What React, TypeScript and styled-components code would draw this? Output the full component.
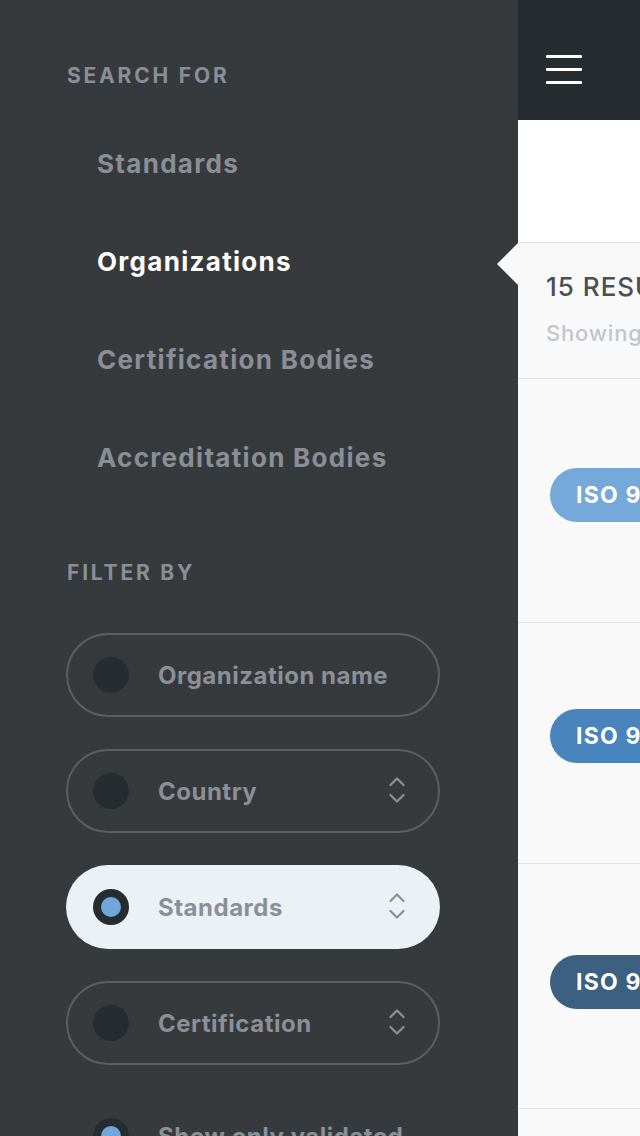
import React from "react";
import styled, { createGlobalStyle } from "styled-components";

const Global = createGlobalStyle`
  html, body { margin: 0; padding: 0; overflow: hidden; }
  body { font-family: Inter, "Noto Sans", sans-serif; background: #f9f9f9; }
  #root { width: 640px; height: 1136px; overflow: hidden; }
`;

const Page = styled.div`
  display: flex;
  width: 640px;
  height: 1136px;
`;

const Sidebar = styled.aside`
  flex: 0 0 518px;
  background: #373a3c;
  box-sizing: border-box;
  padding: 64px 0 0 66px;
  display: flex;
  flex-direction: column;
`;

const SectionTitle = styled.div`
  font-size: 21px;
  font-weight: 700;
  letter-spacing: 2.8px;
  line-height: 24px;
  color: #8a8f97;
  padding-left: 1px;
`;

const NavList = styled.nav`
  display: flex;
  flex-direction: column;
  margin: 26px 0 55px 31px;
`;

const NavItem = styled.div<{ $active?: boolean }>`
  height: 98px;
  display: flex;
  align-items: center;
  font-size: 26px;
  font-weight: 700;
  letter-spacing: 1.3px;
  color: ${(p) => (p.$active ? "#ffffff" : "#8a8f97")};
`;

const FilterList = styled.div`
  display: flex;
  flex-direction: column;
  gap: 32px;
  margin-top: 48px;
`;

const Pill = styled.div<{ $active?: boolean }>`
  width: 374px;
  height: 84px;
  box-sizing: border-box;
  border-radius: 42px;
  border: 2px solid ${(p) => (p.$active ? "transparent" : "#596064")};
  background: ${(p) => (p.$active ? "#eaf2f6" : "transparent")};
  display: flex;
  align-items: center;
  padding: 0 33px 0 25px;
`;

const ToggleRow = styled(Pill)`
  border-color: transparent;
  margin-top: -3px;
`;

const Dot = styled.span<{ $on?: boolean }>`
  flex: 0 0 36px;
  width: 36px;
  height: 36px;
  border-radius: 50%;
  background: #262d30;
  display: flex;
  align-items: center;
  justify-content: center;
  &::after {
    content: "";
    width: 20px;
    height: 20px;
    border-radius: 50%;
    background: #6fa7da;
    display: ${(p) => (p.$on ? "block" : "none")};
  }
`;

const PillLabel = styled.span`
  flex: 1;
  margin-left: 29px;
  font-size: 24px;
  font-weight: 700;
  letter-spacing: 0.5px;
  color: #8b9098;
  white-space: nowrap;
`;

const Chevrons = styled.svg`
  width: 16px;
  height: 28px;
  flex: 0 0 16px;
  margin-top: -3px;
`;

const Main = styled.main`
  flex: 1;
  min-width: 0;
  display: flex;
  flex-direction: column;
  background: #f9f9f9;
`;

const TopBar = styled.header`
  height: 120px;
  background: #262c2f;
  box-sizing: border-box;
  padding: 55px 0 0 28px;
`;

const Burger = styled.div`
  width: 36px;
  display: flex;
  flex-direction: column;
  gap: 10px;
  span {
    display: block;
    height: 3px;
    background: #ffffff;
    border-radius: 1px;
  }
`;

const Blank = styled.div`
  height: 122px;
  background: #ffffff;
  border-bottom: 1px solid #e4e4e4;
`;

const ResultsHead = styled.div`
  position: relative;
  height: 136px;
  box-sizing: border-box;
  border-bottom: 1px solid #e4e4e4;
  padding: 28px 0 0 28px;
  white-space: nowrap;
  &::before {
    content: "";
    position: absolute;
    left: -21px;
    top: 0;
    border-style: solid;
    border-width: 21px 21px 21px 0;
    border-color: transparent #f9f9f9 transparent transparent;
  }
`;

const Count = styled.div`
  font-size: 26px;
  font-weight: 500;
  letter-spacing: 1px;
  color: #4a4f55;
  line-height: 32px;
`;

const Showing = styled.div`
  margin-top: 16px;
  font-size: 22px;
  font-weight: 500;
  letter-spacing: 0.8px;
  color: #c1c6ce;
  line-height: 28px;
`;

const Row = styled.div<{ $top: number; $bottom: number }>`
  padding: ${(p) => p.$top}px 0 ${(p) => p.$bottom}px 32px;
  border-bottom: 1px solid #e4e4e4;
  white-space: nowrap;
`;

const Badge = styled.span<{ $color: string }>`
  display: inline-flex;
  align-items: center;
  height: 54px;
  border-radius: 27px;
  padding: 0 26px;
  background: ${(p) => p.$color};
  color: #ffffff;
  font-size: 23px;
  font-weight: 700;
  letter-spacing: 1.2px;
`;

const ChevronIcon = () => (
  <Chevrons viewBox="0 0 16 28" fill="none" stroke="#8b9098" strokeWidth="2.2" strokeLinecap="round" strokeLinejoin="round">
    <polyline points="1.5,9 8,2.5 14.5,9" />
    <polyline points="1.5,19 8,25.5 14.5,19" />
  </Chevrons>
);

const filters = [
  { label: "Organization name", select: false, active: false },
  { label: "Country", select: true, active: false },
  { label: "Standards", select: true, active: true },
  { label: "Certification", select: true, active: false },
];

const rows = [
  { color: "#74a9d9", top: 89, bottom: 100, text: "ISO 9001:2015" },
  { color: "#4a84bc", top: 86, bottom: 100, text: "ISO 9001:2008" },
  { color: "#3d5f80", top: 91, bottom: 99, text: "ISO 9001:2015" },
];

export default function App() {
  return (
    <>
      <Global />
      <Page>
        <Sidebar>
          <SectionTitle>SEARCH FOR</SectionTitle>
          <NavList>
            <NavItem>Standards</NavItem>
            <NavItem $active>Organizations</NavItem>
            <NavItem>Certification Bodies</NavItem>
            <NavItem>Accreditation Bodies</NavItem>
          </NavList>
          <SectionTitle>FILTER BY</SectionTitle>
          <FilterList>
            {filters.map((f) => (
              <Pill key={f.label} $active={f.active}>
                <Dot $on={f.active} />
                <PillLabel>{f.label}</PillLabel>
                {f.select && <ChevronIcon />}
              </Pill>
            ))}
            <ToggleRow>
              <Dot $on />
              <PillLabel>Show only validated</PillLabel>
            </ToggleRow>
          </FilterList>
        </Sidebar>
        <Main>
          <TopBar>
            <Burger>
              <span />
              <span />
              <span />
            </Burger>
          </TopBar>
          <Blank />
          <ResultsHead>
            <Count>15 RESULTS</Count>
            <Showing>Showing 1–15</Showing>
          </ResultsHead>
          {rows.map((r, i) => (
            <Row key={i} $top={r.top} $bottom={r.bottom}>
              <Badge $color={r.color}>{r.text}</Badge>
            </Row>
          ))}
        </Main>
      </Page>
    </>
  );
}
